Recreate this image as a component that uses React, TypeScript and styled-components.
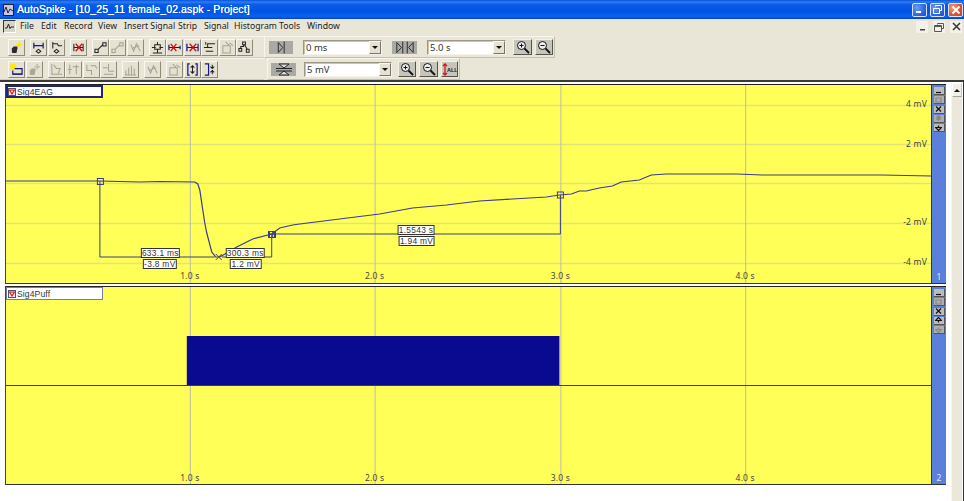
import React from "react";
import styled, { createGlobalStyle } from "styled-components";

const Global = createGlobalStyle`
  html, body { margin: 0; padding: 0; background: #fff; overflow: hidden; }
  #root { width: 964px; height: 501px; }
`;

const UI = `"Noto Sans", "Liberation Sans", sans-serif`;
const SMALL = `"Liberation Sans", sans-serif`;

const Win = styled.div`
  width: 964px; height: 501px; display: flex; flex-direction: column;
  font-family: ${UI}; background: #fff; overflow: hidden;
`;
const TitleBar = styled.div`
  height: 19px; flex: none; display: flex; align-items: center; padding: 0 1px 0 3px; gap: 3px;
  background: linear-gradient(180deg,#0a4fd8 0,#2a7ff2 10%,#0a5ce8 24%,#0054e3 60%,#0a62f0 86%,#0344c4 100%);
`;
const TitleLogo = styled.svg`
  flex: none;
`;
const TitleText = styled.div`
  flex: 1; color: #fff; font: 10.5px/19px "Liberation Sans", sans-serif; letter-spacing: .1px; white-space: nowrap;
  text-shadow: 0 0 .4px #fff;
`;
const CapsBtn = styled.div<{ $red?: boolean }>`
  width: 15px; height: 14px; border: 1px solid #d8e4fb; border-radius: 2px; display: flex; align-items: center; justify-content: center;
  background: ${p => p.$red ? "radial-gradient(circle at 30% 30%,#f0a080,#e0502c 60%,#c83a18)" : "radial-gradient(circle at 30% 30%,#6c9af0,#2a5fdc 70%,#1c49c0)"};
  box-sizing: border-box;
`;
const MenuBar = styled.div`
  height: 17px; flex: none; display: flex; align-items: center; background: #eae6d7; padding: 0 0 2px 3px; box-sizing: border-box;
`;
const MenuIcon = styled.div`
  width: 13px; height: 13px; margin-right: 4px; background: #d8d5c8; border-top: 1px solid #333; border-left: 1px solid #333; border-bottom: 1px solid #fff; border-right: 1px solid #fff; box-sizing: border-box;
  display: flex; align-items: center; justify-content: center;
`;
const MenuItem = styled.div<{ $w: number }>`
  width: ${p => p.$w}px; font-size: 8.7px; line-height: 15px; color: #222; white-space: nowrap;
`;
const MdiBtns = styled.div`
  margin-left: auto; display: flex; gap: 5px; padding-right: 2px;
`;
const MdiBtn = styled.div`
  width: 12px; height: 12px; display: flex; align-items: center; justify-content: center; background: #f3f1e8;
`;
const ToolRow = styled.div`
  height: 22px; flex: none; display: flex; align-items: stretch; background: #eae6d7;
`;
const ToolLeft = styled.div`
  width: 264px; flex: none; display: flex; align-items: center; gap: 5px; padding-left: 8px; box-sizing: border-box;
  border-top: 1px solid #f7f5ec; border-bottom: 1px solid #cfcbb9;
`;
const Group = styled.div`
  display: flex; gap: .5px;
`;
const ToolBtn = styled.div`
  width: 17px; height: 17px; box-sizing: border-box; display: flex; align-items: center; justify-content: center;
  background: #e6e2d2; border: 1px solid; border-color: #faf8f0 #8d8a7a #8d8a7a #faf8f0;
`;
const ToolPanel = styled.div<{ $w: number; $ml: number }>`
  width: ${p => p.$w}px; margin-left: ${p => p.$ml}px; flex: none; display: flex; align-items: center; padding-left: 4px; box-sizing: border-box;
  border: 1px solid; border-color: #f7f5ec #c4c0ae #c4c0ae #f7f5ec;
`;
const GreyToggle = styled.div<{ $w: number; $ml?: number }>`
  width: ${p => p.$w}px; margin-left: ${p => p.$ml ?? 0}px; height: 13px; background: #a9a9a6; display: flex; align-items: center; justify-content: center; flex: none;
`;
const Select = styled.div<{ $w: number; $ml: number }>`
  width: ${p => p.$w}px; height: 15px; margin-left: ${p => p.$ml}px; box-sizing: border-box; flex: none; display: flex;
  background: #fff; border: 1px solid; border-color: #9a9785 #f5f3ea #f5f3ea #9a9785; box-shadow: inset 1px 1px 0 #c9c6b5;
  font-size: 9.5px; line-height: 13px; color: #333; padding-left: 2px;
`;
const SelectText = styled.span`
  flex: 1;
`;
const SelectArrow = styled.div`
  width: 12px; height: 13px; background: #e6e2d2; border: 1px solid; border-color: #faf8f0 #77746a #77746a #faf8f0; box-sizing: border-box;
  display: flex; align-items: center; justify-content: center;
  &::after { content: ""; border: 3px solid transparent; border-top: 3px solid #111; border-bottom: 0; }
`;
const ZoomBtn = styled.div<{ $ml: number; $w: number }>`
  width: ${p => p.$w}px; height: 16px; margin-left: ${p => p.$ml}px; box-sizing: border-box; flex: none; display: flex; align-items: center; justify-content: center;
  background: #c6c5bc; border: 1px solid; border-color: #f4f2e8 #55534a #55534a #f4f2e8;
`;
const Main = styled.div`
  flex: 1; display: flex; border-top: 2px solid #3a3a3a; min-height: 0; background: #fff; margin-right: 1px; position: relative;
`;
const Strips = styled.div`
  width: 941px; margin-left: 5px; padding-top: 2px; display: flex; flex-direction: column; gap: 2px; flex: none;
`;
const Strip = styled.div<{ $h: number }>`
  height: ${p => p.$h}px; flex: none; display: flex; box-sizing: border-box; position: relative;
  border-top: 1px solid #222; border-left: 1px solid #444; border-bottom: 1px solid #333;
`;
const Plot = styled.div`
  flex: 1; position: relative; background: #ffff58; border-right: 1px solid #333; min-width: 0;
`;
const ChartSvg = styled.svg`
  display: block; width: 100%; height: 100%;
`;
const SigLabel = styled.div<{ $active?: boolean }>`
  position: absolute; left: 0; top: 0; width: 97px; height: 13px; box-sizing: border-box; background: #fff; display: flex; align-items: center; gap: 1px; padding-left: ${p => p.$active ? 0 : 1}px;
  border: ${p => p.$active ? "2px solid #23237a" : "1px solid #7b7ba0"}; font: 8.6px/10px ${SMALL}; color: #333; letter-spacing: .1px;
`;
const CheckBox = styled.svg`
  flex: none;
`;
const Side = styled.div`
  width: 14px; flex: none; background: #5b80dc; display: flex; flex-direction: column; align-items: center; gap: 1.3px; padding-top: 2px; position: relative; box-sizing: border-box;
`;
const SideBtn = styled.div<{ $off?: boolean }>`
  width: 11px; height: 8px; background: ${p => p.$off ? "#aeaeae" : "#bcbcbc"}; display: flex; align-items: center; justify-content: center;
  border-right: 1px solid #555; border-bottom: 1px solid #555; box-sizing: border-box;
`;
const SideNum = styled.div`
  position: absolute; bottom: 1px; left: 0; right: 0; text-align: center; font-size: 8.5px; line-height: 11px; color: #dfe8ff;
`;
const Scroll = styled.div`
  width: 11px; margin-left: 5px; background: #ebe7d9; flex: none; display: flex; flex-direction: column; margin-top: 1px; border-left: 1px solid #f7f5ee; box-sizing: border-box;
`;
const ScrollBtn = styled.div`
  height: 14px; background: #f2f0e6; border: 1px solid; border-color: #fff #c9c5b4 #a8a493 #fff; box-sizing: border-box; display: flex; align-items: center; justify-content: center;
  &::after { content: ""; border: 3px solid transparent; border-bottom: 3px solid #111; border-top: 0; }
`;
const RightRule = styled.div`
  position: absolute; right: -1px; top: -2px; bottom: 0; width: 1px; background: #333;
`;

type Ic = { d?: string; r?: string; b?: string; y?: string; f?: string };
const Icon = ({ i, off }: { i: Ic; off?: boolean }) => (
  <svg width="13" height="13" viewBox="0 0 14 14" fill="none">
    {i.f && <path d={i.f} fill={off ? "#aaa797" : "#2a2a2a"} />}
    {i.y && <path d={i.y} stroke={off ? "#c0bdae" : "#ffe800"} strokeWidth="1.800" />}
    {i.d && <path d={i.d} stroke={off ? "#a5a293" : "#222"} strokeWidth="1.100" />}
    {i.b && <path d={i.b} stroke={off ? "#a5a293" : "#14148c"} strokeWidth="1.300" />}
    {i.r && <path d={i.r} stroke={off ? "#b5a8a0" : "#c8101c"} strokeWidth="1.400" />}
  </svg>
);

const dia = "M7 9l2.500 2-2.500 2-2.500-2z";
const I = {
  cube: { f: "M2 8l2-2h4v2l-1 5H3l-1-1z", y: "M10 1v6M7 4h6" },
  span: { b: "M2 2v6M12 2v6M2 5h10", d: dia },
  step: { d: "M3 1v7M3 3h5l1 2h4" + dia },
  del: { d: "M2 3v8M12 3v8M2 7h10", r: "M4 3l7 8M11 3l-7 8" },
  link: { d: "M1 9h3.500v3.500H1zM9.500 2H13v3.500H9.500zM4.500 9l5-5" },
  base: { d: "M1 7h4M9 7h4M4 4h6v5H4zM7 1v3M7 9v4M2 13h10" },
  xleft: { b: "M1 4v6M1 7h12M13 5v4", r: "M3 3l6 8M9 3l-6 8" },
  xspan: { b: "M1 3v8M13 3v8M1 7h12", r: "M4 3l7 8M11 3l-7 8" },
  stair: { d: "M1 7h4V3h8M5 7h5M3 11h8M3 1v3" },
  net: { d: "M5 1h3v3H5zM1 8h3v3H1zM9 9h3v3H9zM6 4v2H3v2M7 4l3 5" },
  newBox: { y: "M3 1v7M0 4h7M1 1l5 6M6 1l-5 6", b: "M5 6h8v6H3V8", d: "M3 12h10" },
  curve1: { d: "M2 1v11h11M4 2l3 4h4l-2 5" },
  curve2: { d: "M3 2v10M10 2v10M1 7h4M6 4h7" },
  curve3: { d: "M2 2v6h5v5M6 3h5l2 3" },
  curve4: { d: "M7 1v8M1 5h5M7 9h6M2 12h10" },
  bars: { d: "M2 13V8M5 13V5M8 13V3M11 13V6M1 13h12" },
  xwave: { d: "M2 4l3 7 3-8 4 8M3 8l8-3" },
  box2: { d: "M2 5h8v8H2zM5 1l4 4M9 2l4 3" },
  brk: { b: "M4 1H2v12h2M10 1h2v12h-2", d: "M7 3v8M5 5l2-2 2 2M5 9l2 2 2-2" },
  brk2: { b: "M2 1h4v12H2", d: "M10 2v3M8 4l2 2 2-2M10 12V9M8 10l2-2 2 2" },
} satisfies Record<string, Ic>;

const row1: { i: Ic; off?: boolean }[][] = [
  [{ i: I.cube }],
  [{ i: I.span }, { i: I.step }],
  [{ i: I.del }],
  [{ i: I.link }, { i: I.link, off: true }, { i: I.xwave, off: true }],
  [{ i: I.base }, { i: I.xleft }, { i: I.xspan }, { i: I.stair }, { i: I.box2, off: true }, { i: I.net }],
];
const row2: { i: Ic; off?: boolean }[][] = [
  [{ i: I.newBox }, { i: I.cube, off: true }],
  [{ i: I.curve1, off: true }, { i: I.curve2, off: true }, { i: I.curve3, off: true }, { i: I.curve4, off: true }],
  [{ i: I.bars, off: true }],
  [{ i: I.xwave, off: true }],
  [{ i: I.box2, off: true }, { i: I.brk }, { i: I.brk2 }],
];

const Tools = ({ groups }: { groups: { i: Ic; off?: boolean }[][] }) => (
  <ToolLeft>
    {groups.map((g, gi) => (
      <Group key={gi}>
        {g.map((b, bi) => <ToolBtn key={bi}><Icon i={b.i} off={b.off} /></ToolBtn>)}
      </Group>
    ))}
  </ToolLeft>
);

const Mag = ({ sign }: { sign: "+" | "-" }) => (
  <svg width="14" height="14" viewBox="0 0 14 14" fill="none" stroke="#111">
    <circle cx="5.500" cy="5.500" r="4" fill="#eee" />
    <path d="M8.500 8.500l4.500 4.500" strokeWidth="1.800" />
    <path d={sign === "+" ? "M3.500 5.500h4M5.500 3.500v4" : "M3.500 5.500h4"} />
  </svg>
);

const Tri = ({ kind }: { kind: "one" | "two" | "v" }) => (
  <svg width={kind === "v" ? 22 : 20} height="13" viewBox="0 0 22 13" fill="none" stroke="#222">
    {kind === "one" && <path d="M8 1v11l5-5.500zM14.500 0v13" />}
    {kind === "two" && <path d="M2 1v11l5-5.500zM8.500 0v13M20 1v11l-5-5.500zM13.500 0v13" />}
    {kind === "v" && <path d="M3 5.500h16M3 8h16M6 1h10l-5 4zM6 12h10l-5-4z" fill="#ddd" />}
  </svg>
);

const Check = () => (
  <CheckBox width="8" height="8" viewBox="0 0 8 8" fill="none">
    <rect x=".5" y=".5" width="7" height="7" fill="#e4e4f2" stroke="#555" />
    <path d="M1.500 2h5L4 6z" stroke="#e01020" strokeWidth="1.100" />
  </CheckBox>
);

const GRID_H = "#e2e27a";
const GRID_V = "#bcbcb0";
const TRACE = "#3a3a8e";

const curve = "6,181 100,181 140,182 160,181.500 195,182 198,184 200,190 203,210 205,223 207,233 212,252 216,257 220,257 227,253 237,247 253,239 272,234 280,228 293,225 300,224 340,219 380,214 413,208 447,205 480,201 513,199 547,197 560,195 572,194 580,191 587,191 600,188 613,186 622,182 640,180 652,175 667,174 683,174 710,174 737,174 763,175 830,175 853,175 883,175 932,176";

const Boxed = ({ x, y, w, t }: { x: number; y: number; w: number; t: string }) => (
  <g>
    <rect x={x + .5} y={y + .5} width={w} height={9} fill="#fff" stroke="#333" />
    <text x={x + w / 2 + .5} y={y + 8} textAnchor="middle" fontSize="8.400" fill="#333" fontFamily={SMALL} letterSpacing=".3">{t}</text>
  </g>
);

const XTicks = ({ top, bottom, labelY, size }: { top: number; bottom: number; labelY: number; size: number }) => (
  <g>
    {[190, 375, 561, 746].map(x => <line key={x} x1={x + .5} x2={x + .5} y1={top} y2={bottom} stroke={GRID_V} />)}
    {[190, 375, 561, 746].map((x, k) => (
      <text key={x} x={x} y={labelY} textAnchor="middle" fontSize={size} fill="#444" fontFamily={UI} letterSpacing=".2">{`${k + 1}.0 s`}</text>
    ))}
  </g>
);

const Chart1 = () => (
  <ChartSvg viewBox="6 85 926 198" preserveAspectRatio="none">
    {[105, 144, 183, 223, 263].map(y => <line key={y} x1="6" x2="932" y1={y + .5} y2={y + .5} stroke={GRID_H} strokeWidth="1.400" />)}
    <XTicks top={85} bottom={283} labelY={279} size={8.5} />
    {[["4 mV", 107], ["2 mV", 147], ["-2 mV", 225], ["-4 mV", 265]].map(([t, y]) => (
      <text key={t} x="928" y={y} textAnchor="end" fontSize="8.500" fill="#444" fontFamily={UI} letterSpacing=".2">{t}</text>
    ))}
    <polyline points={curve} fill="none" stroke={TRACE} strokeWidth="1.200" />
    <g stroke={TRACE} fill="none" shapeRendering="crispEdges">
      <path d="M100 181V257H215M222 257H272V234M272 234H561V195" />
      <rect x="97.500" y="178.500" width="6" height="6" />
      <rect x="558" y="192" width="6" height="6" />
      <rect x="269.500" y="231.500" width="6" height="6" strokeWidth="1.500" />
    </g>
    <path d="M270 234h6M273 231v6" stroke={TRACE} />
    <path d="M216 254l3 3-3 3M222 254l-3 3 3 3" stroke="#444" fill="none" />
    <Boxed x={141} y={248} w={38} t="633.1 ms" />
    <Boxed x={143} y={259} w={33} t="-3.8 mV" />
    <Boxed x={226} y={248} w={38} t="300.3 ms" />
    <Boxed x={230} y={259} w={31} t="1.2 mV" />
    <Boxed x={398} y={225} w={36} t="1.5543 s" />
    <Boxed x={399} y={236} w={35} t="1.94 mV" />
  </ChartSvg>
);

const Chart2 = () => (
  <ChartSvg viewBox="6 287 926 197" preserveAspectRatio="none">
    <XTicks top={287} bottom={484} labelY={481} size={8.5} />
    <rect x="187" y="336" width="373" height="49" fill="#0a0a90" />
    <line x1="6" x2="932" y1="385.500" y2="385.500" stroke="#3c3c3c" />
  </ChartSvg>
);

const SB = ({ g, off }: { g: string; off?: boolean }) => (
  <SideBtn $off={off}>
    <svg width="7" height="6" viewBox="0 0 7 6" fill="none" stroke={off ? "#888" : "#111"}>
      <path d={g} strokeWidth="1.200" />
    </svg>
  </SideBtn>
);
const G = {
  min: "M1 4.500h5", sq: "M1 1h5v4H1z", x: "M1 .5l5 5M6 .5l-5 5",
  star: "M3.500 0v6M.5 3h6M1.500 1l4 4M5.500 1l-4 4", up: "M3.500 .5L6.500 3.500h-6zM3.500 3.500v2", down: "M3.500 5.500L6.500 2.500h-6zM3.500 2.500v-2",
};

export default function App() {
  const menus: [string, number][] = [["File", 21], ["Edit", 23], ["Record", 34], ["View", 26], ["Insert Signal", 54], ["Strip", 26], ["Signal", 30], ["Histogram", 45], ["Tools", 28], ["Window", 40]];
  return (
    <Win>
      <Global />
      <TitleBar>
        <TitleLogo width="11" height="12" viewBox="0 0 11 12" fill="none">
          <rect x=".5" y=".5" width="10" height="11" fill="#c8c8e0" stroke="#222" />
          <path d="M1 8l2-5 2 6 2-4 3 2" stroke="#223" />
        </TitleLogo>
        <TitleText>AutoSpike - [10_25_11 female_02.aspk - Project]</TitleText>
        <CapsBtn>
          <svg width="9" height="9" viewBox="0 0 9 9"><rect x="1" y="6" width="5" height="2" fill="#fff" /></svg>
        </CapsBtn>
        <CapsBtn>
          <svg width="11" height="11" viewBox="0 0 11 11" fill="none" stroke="#fff"><path d="M3.500 2.500V1.500h6v5H8M1.500 4.500h6v5h-6z" /></svg>
        </CapsBtn>
        <CapsBtn $red>
          <svg width="10" height="10" viewBox="0 0 10 10" stroke="#fff" strokeWidth="1.800"><path d="M1.500 1.500l7 7M8.500 1.500l-7 7" /></svg>
        </CapsBtn>
      </TitleBar>
      <MenuBar>
        <MenuIcon>
          <svg width="9" height="7" viewBox="0 0 9 7" fill="none" stroke="#222"><path d="M0 5h2l1.500-4L5 5.500 6 4h3" /></svg>
        </MenuIcon>
        {menus.map(([m, w]) => <MenuItem key={m} $w={w}>{m}</MenuItem>)}
        <MdiBtns>
          <MdiBtn><svg width="9" height="9" viewBox="0 0 9 9"><rect x="2" y="7" width="5" height="1.500" fill="#444" /></svg></MdiBtn>
          <MdiBtn><svg width="10" height="10" viewBox="0 0 10 10" fill="none" stroke="#555"><path d="M3.500 2.500v-1h6v5H8M.5 3.500h7v6h-7zM.5 4.500h7" /></svg></MdiBtn>
          <MdiBtn><svg width="9" height="9" viewBox="0 0 9 9" stroke="#333" strokeWidth="1.500"><path d="M1 1l7 7M8 1l-7 7" /></svg></MdiBtn>
        </MdiBtns>
      </MenuBar>
      <ToolRow>
        <Tools groups={row1} />
        <ToolPanel $w={291} $ml={0}>
          <GreyToggle $w={24}><Tri kind="one" /></GreyToggle>
          <Select $w={79} $ml={10}><SelectText>0 ms</SelectText><SelectArrow /></Select>
          <GreyToggle $w={25} $ml={10}><Tri kind="two" /></GreyToggle>
          <Select $w={79} $ml={10}><SelectText>5.0 s</SelectText><SelectArrow /></Select>
          <ZoomBtn $ml={7} $w={19}><Mag sign="+" /></ZoomBtn>
          <ZoomBtn $ml={3} $w={18}><Mag sign="-" /></ZoomBtn>
        </ToolPanel>
      </ToolRow>
      <ToolRow>
        <Tools groups={row2} />
        <ToolPanel $w={193} $ml={3}>
          <GreyToggle $w={25} $ml={-1}><Tri kind="v" /></GreyToggle>
          <Select $w={88} $ml={8}><SelectText>5 mV</SelectText><SelectArrow /></Select>
          <ZoomBtn $ml={6} $w={18}><Mag sign="+" /></ZoomBtn>
          <ZoomBtn $ml={3} $w={19}><Mag sign="-" /></ZoomBtn>
          <ZoomBtn $ml={3} $w={17}>
            <svg width="15" height="13" viewBox="0 0 15 13" fill="none">
              <path d="M3 1v11M1 3l2-2 2 2M1 10l2 2 2-2" stroke="#e01020" strokeWidth="1.300" />
              <text x="5" y="9" fontSize="5.500" fontWeight="700" fill="#222" fontFamily={SMALL}>ALL</text>
            </svg>
          </ZoomBtn>
        </ToolPanel>
      </ToolRow>
      <Main>
        <Strips>
          <Strip $h={200}>
            <Plot>
              <Chart1 />
              <SigLabel $active><Check />Sig4EAG</SigLabel>
            </Plot>
            <Side>
              <SB g={G.min} /><SB g={G.sq} off /><SB g={G.x} /><SB g={G.star} off /><SB g={G.down} />
              <SideNum>1</SideNum>
            </Side>
          </Strip>
          <Strip $h={199}>
            <Plot>
              <Chart2 />
              <SigLabel><Check />Sig4Puff</SigLabel>
            </Plot>
            <Side>
              <SB g={G.min} /><SB g={G.sq} off /><SB g={G.x} /><SB g={G.up} /><SB g={G.down} off />
              <SideNum>2</SideNum>
            </Side>
          </Strip>
        </Strips>
        <Scroll><ScrollBtn /></Scroll>
        <RightRule />
      </Main>
    </Win>
  );
}
